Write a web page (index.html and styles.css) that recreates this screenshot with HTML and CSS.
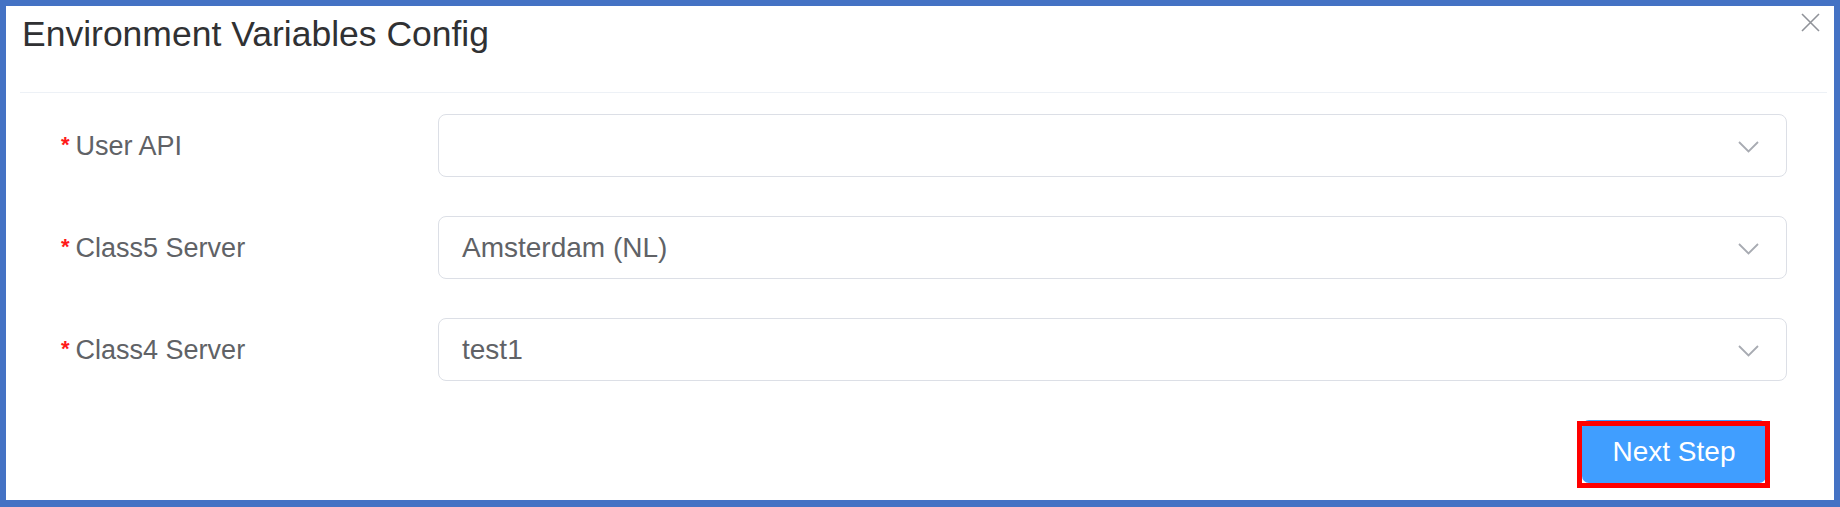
FILE: index.html
```html
<!DOCTYPE html>
<html>
<head>
<meta charset="utf-8">
<link rel="stylesheet" href="styles.css">
</head>
<body>
<div class="dialog">
  <div class="header">
    <span class="title">Environment Variables Config</span>
    <button class="close" aria-label="Close">
      <svg width="19" height="19" viewBox="0 0 19 19"><path d="M1 1 L18 18 M18 1 L1 18" stroke="#909399" stroke-width="1.6" fill="none"/></svg>
    </button>
  </div>
  <div class="divider"></div>
  <div class="form">
    <div class="row">
      <label class="label"><span class="req">*</span>User API</label>
      <div class="select"><span class="value"></span><svg class="arrow" width="21" height="12" viewBox="0 0 21 12"><path d="M1 1 L10.5 10.5 L20 1" stroke="#a8abb2" stroke-width="1.8" fill="none"/></svg></div>
    </div>
    <div class="row">
      <label class="label"><span class="req">*</span>Class5 Server</label>
      <div class="select"><span class="value">Amsterdam (NL)</span><svg class="arrow" width="21" height="12" viewBox="0 0 21 12"><path d="M1 1 L10.5 10.5 L20 1" stroke="#a8abb2" stroke-width="1.8" fill="none"/></svg></div>
    </div>
    <div class="row">
      <label class="label"><span class="req">*</span>Class4 Server</label>
      <div class="select"><span class="value">test1</span><svg class="arrow" width="21" height="12" viewBox="0 0 21 12"><path d="M1 1 L10.5 10.5 L20 1" stroke="#a8abb2" stroke-width="1.8" fill="none"/></svg></div>
    </div>
  </div>
  <div class="footer">
    <button class="btn-primary">Next Step</button>
  </div>
</div>
</body>
</html>
```
FILE: styles.css
```css
html, body {
  margin: 0;
  padding: 0;
}
body {
  width: 1840px;
  height: 507px;
  box-sizing: border-box;
  background: #4472c4;
  padding: 6px 6px 7px 6px;
  font-family: "Liberation Sans", Arial, sans-serif;
}
.dialog {
  background: #ffffff;
  height: 494px;
  position: relative;
  display: flex;
  flex-direction: column;
}
.header {
  padding: 7px 16px 0 16px;
  height: 79px;
  box-sizing: border-box;
}
.title {
  font-size: 35.5px;
  line-height: 42px;
  color: #303133;
}
.close {
  position: absolute;
  top: 7px;
  right: 14px;
  width: 19px;
  height: 19px;
  padding: 0;
  border: none;
  background: transparent;
  display: block;
}
.close svg {
  display: block;
}
.divider {
  height: 1px;
  background: #edf1f6;
  margin: 7px 7px 0 14px;
}
.form {
  padding: 21px 47px 0 55px;
  display: flex;
  flex-direction: column;
  gap: 39px;
}
.row {
  display: flex;
  align-items: center;
  height: 63px;
}
.label {
  width: 377px;
  flex: none;
  font-size: 27px;
  line-height: 32px;
  color: #606266;
}
.req {
  color: #ff1a1a;
  font-size: 22px;
  font-weight: bold;
  margin-right: 6px;
  vertical-align: 3px;
}
.select {
  flex: 1;
  height: 63px;
  box-sizing: border-box;
  border: 1px solid #dcdfe6;
  border-radius: 8px;
  display: flex;
  align-items: center;
  padding: 0 27px 0 23px;
}
.value {
  flex: 1;
  font-size: 28px;
  color: #606266;
}
.arrow {
  display: block;
  flex: none;
  margin-top: 2px;
}
.footer {
  display: flex;
  justify-content: flex-end;
  padding: 39px 68px 0 0;
}
.btn-primary {
  position: relative;
  width: 184px;
  height: 63px;
  border: none;
  border-radius: 7px;
  background: #409eff;
  color: #ffffff;
  font-family: "Liberation Sans", Arial, sans-serif;
  font-size: 28px;
  padding: 0;
}
.btn-primary::after {
  content: "";
  position: absolute;
  left: -5px;
  top: 1px;
  right: -4px;
  bottom: -5px;
  border: 5px solid #ff0000;
}
```
